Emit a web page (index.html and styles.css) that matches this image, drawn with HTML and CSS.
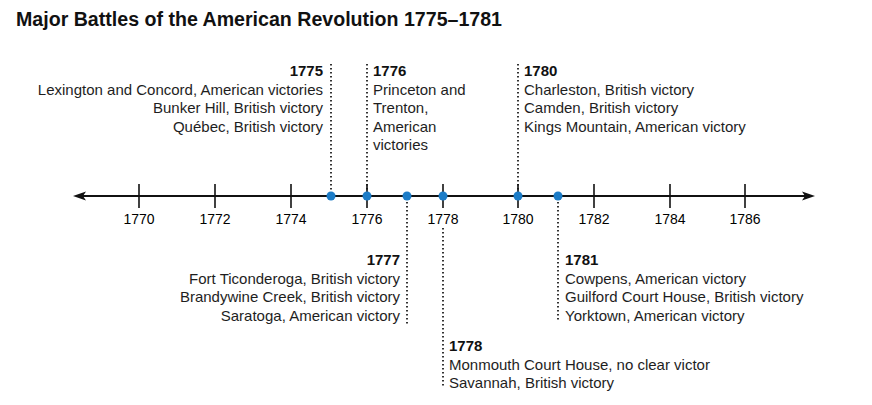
FILE: index.html
```html
<!DOCTYPE html>
<html lang="en">
<head>
<meta charset="utf-8">
<title>Major Battles of the American Revolution 1775–1781</title>
<link rel="stylesheet" href="styles.css">
</head>
<body>
<div class="page">
  <h1 class="title">Major Battles of the American Revolution 1775–1781</h1>
  <div class="chart">
    <svg class="axis" viewBox="0 30 872 375" width="872" height="375" aria-hidden="true">
      <g class="leaders">
        <line x1="331" y1="64" x2="331" y2="190"/>
        <line x1="367" y1="64" x2="367" y2="190"/>
        <line x1="518" y1="64" x2="518" y2="190"/>
        <line x1="407" y1="202" x2="407" y2="324"/>
        <line x1="443" y1="228" x2="443" y2="388"/>
        <line x1="558" y1="202" x2="558" y2="322"/>
      </g>
      <line class="main" x1="80" y1="196" x2="808" y2="196"/>
      <polygon class="head" points="73,196 86,191.5 83,196 86,200.5"/>
      <polygon class="head" points="815,196 802,191.5 805,196 802,200.5"/>
      <g class="ticks">
        <line x1="139" y1="184" x2="139" y2="208"/>
        <line x1="215" y1="184" x2="215" y2="208"/>
        <line x1="291" y1="184" x2="291" y2="208"/>
        <line x1="367" y1="184" x2="367" y2="208"/>
        <line x1="443" y1="184" x2="443" y2="208"/>
        <line x1="518" y1="184" x2="518" y2="208"/>
        <line x1="594" y1="184" x2="594" y2="208"/>
        <line x1="670" y1="184" x2="670" y2="208"/>
        <line x1="745" y1="184" x2="745" y2="208"/>
      </g>
      <g class="years">
        <text x="139" y="224">1770</text>
        <text x="215" y="224">1772</text>
        <text x="291" y="224">1774</text>
        <text x="367" y="224">1776</text>
        <text x="443" y="224">1778</text>
        <text x="518" y="224">1780</text>
        <text x="594" y="224">1782</text>
        <text x="670" y="224">1784</text>
        <text x="745" y="224">1786</text>
      </g>
      <g class="dots">
        <circle cx="331" cy="196" r="4.5"/>
        <circle cx="367" cy="196" r="4.5"/>
        <circle cx="407" cy="196" r="4.5"/>
        <circle cx="443" cy="196" r="4.5"/>
        <circle cx="518" cy="196" r="4.5"/>
        <circle cx="558" cy="196" r="4.5"/>
      </g>
    </svg>

    <div class="note note-right" style="right:549px; top:32px;">
      <div class="yr">1775</div>
      <div>Lexington and Concord, American victories</div>
      <div>Bunker Hill, British victory</div>
      <div>Québec, British victory</div>
    </div>
    <div class="note note-narrow" style="left:373px; top:32px;">
      <div class="yr">1776</div>
      <div>Princeton and Trenton, American victories</div>
    </div>
    <div class="note" style="left:524px; top:32px;">
      <div class="yr">1780</div>
      <div>Charleston, British victory</div>
      <div>Camden, British victory</div>
      <div>Kings Mountain, American victory</div>
    </div>
    <div class="note note-right" style="right:472px; top:221px;">
      <div class="yr">1777</div>
      <div>Fort Ticonderoga, British victory</div>
      <div>Brandywine Creek, British victory</div>
      <div>Saratoga, American victory</div>
    </div>
    <div class="note" style="left:565px; top:221px;">
      <div class="yr">1781</div>
      <div>Cowpens, American victory</div>
      <div>Guilford Court House, British victory</div>
      <div>Yorktown, American victory</div>
    </div>
    <div class="note" style="left:449px; top:307px;">
      <div class="yr">1778</div>
      <div>Monmouth Court House, no clear victor</div>
      <div>Savannah, British victory</div>
    </div>
  </div>
</div>
</body>
</html>
```
FILE: styles.css
```css
html, body {
  margin: 0;
  padding: 0;
  background: #ffffff;
}
body {
  font-family: "Liberation Sans", Arial, Helvetica, sans-serif;
  color: #1e1e1e;
}
.page {
  width: 872px;
  height: 405px;
  overflow: hidden;
}
.title {
  margin: 0;
  padding: 8px 0 0 16px;
  font-size: 19.6px;
  line-height: 22px;
  font-weight: 700;
  color: #111;
}
.chart {
  position: relative;
  width: 872px;
  height: 375px;
}
.axis {
  position: absolute;
  left: 0;
  top: 0;
  display: block;
}
.axis .main {
  stroke: #111;
  stroke-width: 2;
}
.axis .head {
  fill: #111;
}
.axis .ticks line {
  stroke: #111;
  stroke-width: 1.6;
}
.axis .leaders line {
  stroke: #000;
  stroke-width: 1.6;
  stroke-dasharray: 1.5 2.5;
}
.axis .dots circle {
  fill: #1c7cc7;
}
.axis .years text {
  font-family: "Liberation Sans", Arial, sans-serif;
  font-size: 14px;
  fill: #000;
  text-anchor: middle;
}
.note {
  position: absolute;
  font-size: 15px;
  line-height: 18.5px;
  white-space: nowrap;
}
.note-right {
  text-align: right;
}
.note-narrow {
  white-space: normal;
  width: 110px;
}
.yr {
  font-weight: 700;
  color: #111;
}
```
